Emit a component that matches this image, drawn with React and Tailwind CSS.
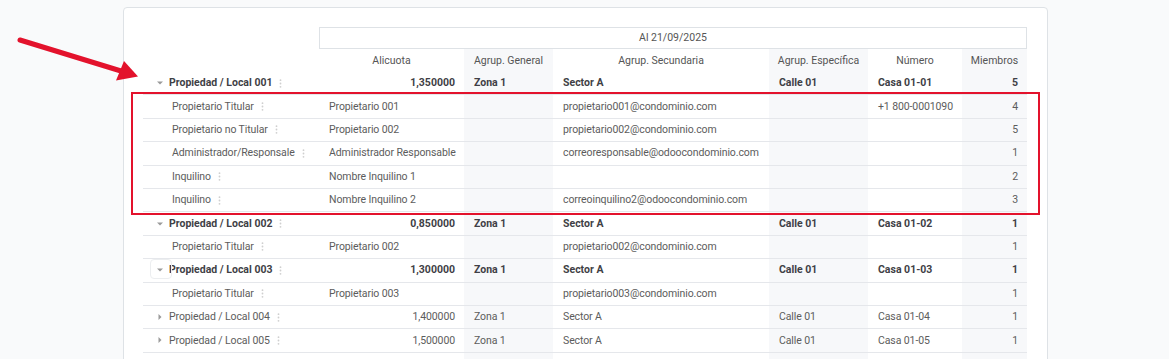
import React from "react";

const GRID = "grid grid-cols-[176px_145px_89px_216px_99px_94px_65px]";

function Dots() {
  return (
    <svg width="3" height="9" viewBox="0 0 3 9" className="ml-[7px] shrink-0">
      <circle cx="1.5" cy="1.2" r="0.9" fill="#cfcfcf" />
      <circle cx="1.5" cy="4.5" r="0.9" fill="#cfcfcf" />
      <circle cx="1.5" cy="7.8" r="0.9" fill="#cfcfcf" />
    </svg>
  );
}

function Caret({ open }) {
  return open ? (
    <svg width="6" height="4" viewBox="0 0 6 4" className="shrink-0">
      <path d="M0 0.5 L6 0.5 L3 3.5 Z" fill="#9a9a9a" />
    </svg>
  ) : (
    <svg width="6" height="6" viewBox="0 0 6 6" className="shrink-0">
      <path d="M1.5 0 L4.5 3 L1.5 6 Z" fill="#9a9a9a" />
    </svg>
  );
}

const rows = [
  { kind: "open", label: "Propiedad / Local 001", c: ["1,350000", "Zona 1", "Sector A", "Calle 01", "Casa 01-01", "5"] },
  { kind: "sub", label: "Propietario Titular", c: ["Propietario 001", "", "propietario001@condominio.com", "", "+1 800-0001090", "4"] },
  { kind: "sub", label: "Propietario no Titular", c: ["Propietario 002", "", "propietario002@condominio.com", "", "", "5"] },
  { kind: "sub", label: "Administrador/Responsale", c: ["Administrador Responsable", "", "correoresponsable@odoocondominio.com", "", "", "1"] },
  { kind: "sub", label: "Inquilino", c: ["Nombre Inquilino 1", "", "", "", "", "2"] },
  { kind: "sub", label: "Inquilino", c: ["Nombre Inquilino 2", "", "correoinquilino2@odoocondominio.com", "", "", "3"] },
  { kind: "open", label: "Propiedad / Local 002", c: ["0,850000", "Zona 1", "Sector A", "Calle 01", "Casa 01-02", "1"] },
  { kind: "sub", label: "Propietario Titular", c: ["Propietario 002", "", "propietario002@condominio.com", "", "", "1"] },
  { kind: "open", focus: true, label: "Propiedad / Local 003", c: ["1,300000", "Zona 1", "Sector A", "Calle 01", "Casa 01-03", "1"] },
  { kind: "sub", label: "Propietario Titular", c: ["Propietario 003", "", "propietario003@condominio.com", "", "", "1"] },
  { kind: "closed", label: "Propiedad / Local 004", c: ["1,400000", "Zona 1", "Sector A", "Calle 01", "Casa 01-04", "1"] },
  { kind: "closed", label: "Propiedad / Local 005", c: ["1,500000", "Zona 1", "Sector A", "Calle 01", "Casa 01-05", "1"] },
  { kind: "closed", label: "Propiedad / Local 006", c: ["1,600000", "Zona 1", "Sector A", "Calle 01", "Casa 01-06", "1"] },
];

function Row({ r }) {
  const isSub = r.kind === "sub";
  const bold = r.kind === "open";
  const txt = bold ? "font-bold text-[#3f3f46]" : "text-[#5c5c5c] tracking-[-0.1px]";
  return (
    <div className={`${GRID} h-[23.4px] border-b border-[#e5e7eb] ${txt}`}>
      <div className={`flex items-center ${isSub ? "pl-[29px]" : "pl-[14px]"}`}>
        {!isSub && (
          <div className="relative mr-[6px] flex w-[6px] items-center justify-center">
            {r.focus && (
              <div className="absolute left-[-7px] top-[-9px] h-[20px] w-[22px] rounded-[4px] border border-[#eceef0]" />
            )}
            <Caret open={r.kind === "open"} />
          </div>
        )}
        <span className="whitespace-nowrap">{r.label}</span>
        <Dots />
      </div>
      {r.c.map((v, i) => {
        const gray = i === 1 || i === 3 || i === 5;
        const right = i === 5 || (i === 0 && !isSub);
        return (
          <div
            key={i}
            className={`flex items-center whitespace-nowrap ${gray ? "bg-[#f7f8fa]" : ""} ${
              right ? "justify-end pr-[9px]" : "pl-[10px]"
            }`}
          >
            {v}
          </div>
        );
      })}
    </div>
  );
}

export default function App() {
  const heads = ["Alicuota", "Agrup. General", "Agrup. Secundaria", "Agrup. Específica", "Número", "Miembros"];
  return (
    <div
      className="relative h-[359px] overflow-hidden bg-[#f9fafb] pt-[7px] pl-[2px] flex justify-center text-[10.5px]"
      style={{ fontFamily: "Roboto, 'Noto Sans', sans-serif" }}
    >
      <div className="relative h-[420px] w-[925px] shrink-0 rounded-[4px] border border-[#dee2e6] bg-white pt-[19px] pl-[19px] pr-[20px]">
        <div className={GRID}>
          <div />
          <div className="col-span-6 flex h-[22px] items-center justify-center border border-[#dee2e6] text-[#555]">
            Al 21/09/2025
          </div>
        </div>
        <div className={`${GRID} h-[23px] text-[#555]`}>
          <div />
          {heads.map((h, i) => (
            <div
              key={h}
              className={`flex items-center justify-center whitespace-nowrap ${
                i === 1 || i === 3 || i === 5 ? "bg-[#f7f8fa]" : ""
              }`}
            >
              {h}
            </div>
          ))}
        </div>
        {rows.map((r, i) => (
          <Row key={i} r={r} />
        ))}
        <div className="pointer-events-none absolute left-[7px] top-[84px] h-[122.5px] w-[909px] border-2 border-[#e3122c]" />
      </div>
      <svg
        className="pointer-events-none absolute left-0 top-0"
        width="160"
        height="100"
        viewBox="0 0 160 100"
      >
        <line x1="20" y1="40" x2="121" y2="71" stroke="#e3122c" strokeWidth="5" strokeLinecap="round" />
        <polygon points="124,61 138,76.5 116,80.5" fill="#e3122c" />
      </svg>
    </div>
  );
}
